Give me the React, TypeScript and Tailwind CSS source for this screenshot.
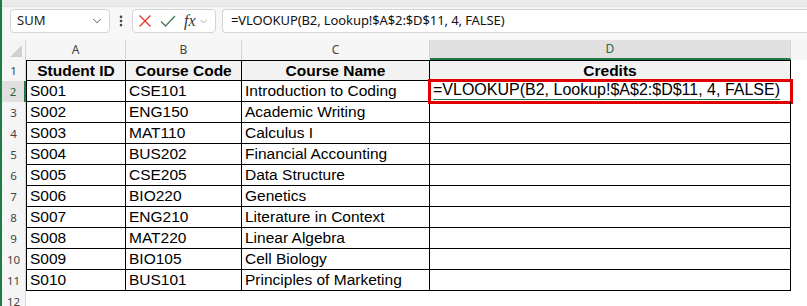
import { ChevronDown, EllipsisVertical } from "lucide-react";

const rows = [
  ["S001", "CSE101", "Introduction to Coding"],
  ["S002", "ENG150", "Academic Writing"],
  ["S003", "MAT110", "Calculus I"],
  ["S004", "BUS202", "Financial Accounting"],
  ["S005", "CSE205", "Data Structure"],
  ["S006", "BIO220", "Genetics"],
  ["S007", "ENG210", "Literature in Context"],
  ["S008", "MAT220", "Linear Algebra"],
  ["S009", "BIO105", "Cell Biology"],
  ["S010", "BUS101", "Principles of Marketing"],
];

const formula = "=VLOOKUP(B2, Lookup!$A$2:$D$11, 4, FALSE)";

const ui = { fontFamily: '"Noto Sans", "Open Sans", sans-serif' };
const cellFont = { fontFamily: '"Liberation Sans", Arial, sans-serif' };

export default function App() {
  return (
    <div className="w-[807px] h-[306px] overflow-hidden bg-white border-l-2 border-[#1f7a45] flex flex-col" style={ui}>
      {/* top strip */}
      <div className="h-[7px] shrink-0 bg-[#ebebeb] border-b border-[#e0e0e0]" />

      {/* formula bar */}
      <div className="h-[33px] shrink-0 bg-[#f7f7f7] flex items-start pt-[2px] pl-[8px]">
        <div className="w-[100px] h-[24px] bg-white border border-[#d4d4d4] rounded-[4px] flex items-center justify-between pl-[6px] pr-[5px]">
          <span className="text-[13px] text-[#222]">SUM</span>
          <ChevronDown size={14} strokeWidth={1.5} className="text-[#444]" />
        </div>
        <div className="w-[22px] h-[24px] flex items-center justify-center">
          <EllipsisVertical size={14} strokeWidth={2.5} className="text-[#444]" />
        </div>
        <div className="w-[84px] h-[24px] bg-white border border-[#d4d4d4] rounded-[4px] flex items-center pl-[4px] gap-[8px]">
          <svg width="14" height="14" viewBox="0 0 14 14" className="ml-[1px]">
            <path d="M1.5 1.5 L12.5 12.5 M12.5 1.5 L1.5 12.5" stroke="#e8322b" strokeWidth="1.3" fill="none" />
          </svg>
          <svg width="16" height="14" viewBox="0 0 16 14">
            <path d="M1 7.5 L5.5 12 L15 2" stroke="#4d7a5c" strokeWidth="1.4" fill="none" />
          </svg>
          <div className="flex items-center gap-[2px]">
            <span className="text-[16px] italic text-[#333] leading-none" style={{ fontFamily: '"Liberation Serif", "Times New Roman", serif' }}>fx</span>
            <ChevronDown size={11} strokeWidth={1.5} className="text-[#888]" />
          </div>
        </div>
        <div className="flex-1 ml-[6px] h-[24px] bg-white border border-[#d4d4d4] border-r-0 rounded-l-[4px] flex items-center pl-[8px]">
          <span className="text-[13px] text-[#111] tracking-[-0.1px]">{formula}</span>
        </div>
      </div>

      {/* column headers */}
      <div className="h-[20px] shrink-0 flex bg-[#f5f5f5] text-[12px] text-[#444]">
        <div className="w-[24px] border-r border-[#d4d4d4] relative">
          <svg width="14" height="14" viewBox="0 0 14 14" className="absolute right-[2px] bottom-[2px]">
            <path d="M13 1 L13 13 L1 13 Z" fill="#d0d0d0" />
          </svg>
        </div>
        <div className="w-[100px] border-r border-[#d4d4d4] flex items-center justify-center">A</div>
        <div className="w-[116px] border-r border-[#d4d4d4] flex items-center justify-center">B</div>
        <div className="w-[188px] border-r border-[#d4d4d4] flex items-center justify-center">C</div>
        <div className="w-[361px] bg-[#e0e0e0] border-r border-[#d4d4d4] border-b-2 border-b-[#1f7a45] flex items-center justify-center text-[#1f6b3e]">D</div>
        <div className="flex-1" />
      </div>

      {/* sheet */}
      <div className="flex flex-col shrink-0 text-[15.5px] text-black" style={cellFont}>
        <div className="h-[21px] flex">
          <div className="w-[24px] bg-[#f5f5f5] border-r border-[#d4d4d4] flex items-center justify-center text-[11.5px] text-[#444]" style={ui}>1</div>
          {[
            ["Student ID", "w-[100px] border-l"],
            ["Course Code", "w-[116px]"],
            ["Course Name", "w-[188px]"],
            ["Credits", "w-[361px]"],
          ].map(([t, w]) => (
            <div key={t} className={`${w} bg-[#f2f2f2] border-t border-r border-b border-black font-bold flex items-center justify-center leading-none`}>
              {t}
            </div>
          ))}
        </div>

        {rows.map((r, i) => (
          <div key={r[0]} className="h-[21px] flex">
            <div
              className={`w-[24px] flex items-center justify-center text-[11.5px] ${
                i === 0 ? "bg-[#e0e0e0] border-r-2 border-[#1f7a45] text-[#1f6b3e]" : "bg-[#f5f5f5] border-r border-[#d4d4d4] text-[#444]"
              }`}
              style={ui}
            >
              {i + 2}
            </div>
            <div className="w-[100px] border-l border-r border-b border-black flex items-center pl-[3px] leading-none">{r[0]}</div>
            <div className="w-[116px] border-r border-b border-black flex items-center pl-[3px] leading-none">{r[1]}</div>
            <div className="w-[188px] border-r border-b border-black flex items-center pl-[3px] leading-none">{r[2]}</div>
            <div className="w-[361px] border-r border-b border-black flex items-center pl-[3px] leading-none relative">
              {i === 0 && (
                <>
                  <span className="text-[16px] border-b border-[#1f7a45] pb-[1px] whitespace-nowrap">{formula}</span>
                  <div className="absolute -left-[2px] -top-[2px] -right-[3px] -bottom-[3px] border-[3px] border-[#e00000]" />
                </>
              )}
            </div>
          </div>
        ))}

        <div className="h-[21px] flex">
          <div className="w-[24px] bg-[#f5f5f5] border-r border-[#d4d4d4] flex items-center justify-center text-[11.5px] text-[#444]" style={ui}>12</div>
        </div>
      </div>
    </div>
  );
}
